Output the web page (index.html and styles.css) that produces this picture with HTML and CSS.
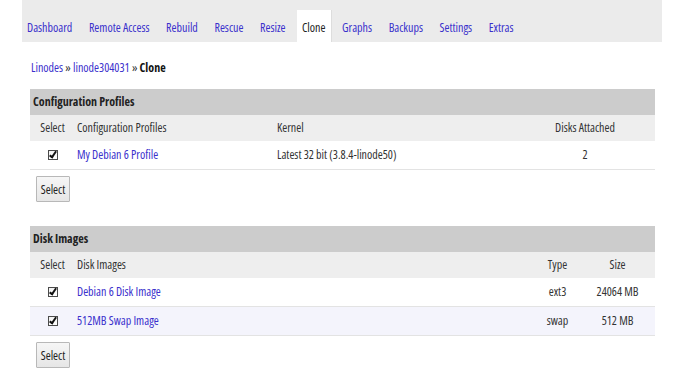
FILE: index.html
```html
<!DOCTYPE html>
<html lang="en">
<head>
  <meta charset="UTF-8">
  <title>Linode Manager - Clone</title>
  <link rel="stylesheet" href="styles.css">
</head>
<body>

  <div class="tabs">
    <a href="#">Dashboard</a>
    <a href="#">Remote Access</a>
    <a href="#">Rebuild</a>
    <a href="#">Rescue</a>
    <a href="#">Resize</a>
    <a href="#" class="active">Clone</a>
    <a href="#">Graphs</a>
    <a href="#">Backups</a>
    <a href="#">Settings</a>
    <a href="#">Extras</a>
  </div>

  <div class="crumbs">
    <a href="#">Linodes</a> &raquo; <a href="#">linode304031</a> &raquo; <b>Clone</b>
  </div>

  <table class="list">
    <colgroup>
      <col class="w-sel"><col class="w-name1"><col class="w-kernel"><col>
    </colgroup>
    <thead>
      <tr class="title"><th colspan="4">Configuration Profiles</th></tr>
      <tr class="cols">
        <td class="c">Select</td>
        <td>Configuration Profiles</td>
        <td>Kernel</td>
        <td class="c">Disks Attached</td>
      </tr>
    </thead>
    <tbody>
      <tr>
        <td class="c"><span class="check"></span></td>
        <td><a href="#">My Debian 6 Profile</a></td>
        <td>Latest 32 bit (3.8.4-linode50)</td>
        <td class="c">2</td>
      </tr>
    </tbody>
  </table>
  <button class="btn">Select</button>

  <table class="list second">
    <colgroup>
      <col class="w-sel"><col class="w-name2"><col class="w-type"><col>
    </colgroup>
    <thead>
      <tr class="title"><th colspan="4">Disk Images</th></tr>
      <tr class="cols">
        <td class="c">Select</td>
        <td>Disk Images</td>
        <td class="c">Type</td>
        <td class="c">Size</td>
      </tr>
    </thead>
    <tbody>
      <tr>
        <td class="c"><span class="check"></span></td>
        <td><a href="#">Debian 6 Disk Image</a></td>
        <td class="c">ext3</td>
        <td class="c">24064 MB</td>
      </tr>
      <tr class="alt">
        <td class="c"><span class="check"></span></td>
        <td><a href="#">512MB Swap Image</a></td>
        <td class="c">swap</td>
        <td class="c">512 MB</td>
      </tr>
    </tbody>
  </table>
  <button class="btn">Select</button>

</body>
</html>
```
FILE: styles.css
```css
body {
  margin: 0;
  background-color: #ffffff;
  color: #333333;
  font-family: "Open Sans", "Liberation Sans", Arial, sans-serif;
  font-stretch: 75%;
  font-size: 12px;
  line-height: 16px;
}

a {
  color: #3a30cc;
  text-decoration: none;
}

.tabs {
  display: flex;
  margin-left: 22px;
  width: 640px;
  height: 42px;
  padding-top: 10px;
  box-sizing: border-box;
  background-color: #ebebeb;
}

.tabs a {
  display: block;
  height: 32px;
  line-height: 36px;
  padding: 0 5px;
  margin-right: 6.6px;
}

.tabs a.active {
  background-color: #ffffff;
  color: #222222;
  box-shadow: 1px 0 0 #dddddd;
}

.crumbs {
  margin: 18px 0 0 31px;
  height: 29px;
  color: #333333;
}

.crumbs b {
  color: #111111;
}

table.list {
  margin-left: 30px;
  width: 625px;
  border-collapse: collapse;
  table-layout: fixed;
}

table.second {
  margin-top: 24px;
}

.w-sel { width: 45px; }
.w-name1 { width: 200px; }
.w-kernel { width: 240px; }
.w-name2 { width: 460px; }
.w-type { width: 45px; }

.list th,
.list td {
  padding: 0 2px;
  text-align: left;
  white-space: nowrap;
}

.list td.c {
  text-align: center;
}

.list tr.title th {
  height: 26px;
  padding-left: 3px;
  background-color: #cccccc;
  color: #222222;
  font-weight: bold;
}

.list tr.cols td {
  height: 26px;
  background-color: #eeeeee;
  color: #333333;
}

.list tbody td {
  height: 28px;
  border-bottom: 1px solid #e3e3e3;
}

.list tbody tr.alt td {
  background-color: #f4f4fc;
}

.check {
  display: inline-block;
  width: 8px;
  height: 8px;
  border: 1px solid #4a4a4a;
  background: linear-gradient(#f2f2f2, #ffffff);
  position: relative;
  vertical-align: -1px;
}

.check::after {
  content: "";
  position: absolute;
  left: 2px;
  top: -1px;
  width: 2px;
  height: 6px;
  border: solid #111111;
  border-width: 0 2px 2px 0;
  transform: rotate(35deg);
}

.btn {
  display: block;
  margin: 6px 0 0 36px;
  width: 34px;
  height: 26px;
  padding: 0;
  font-family: inherit;
  font-stretch: inherit;
  font-size: 12px;
  color: #222222;
  background: linear-gradient(#f6f6f6, #e6e6e6);
  border: 1px solid #b8b8b8;
  border-radius: 1px;
}
```
